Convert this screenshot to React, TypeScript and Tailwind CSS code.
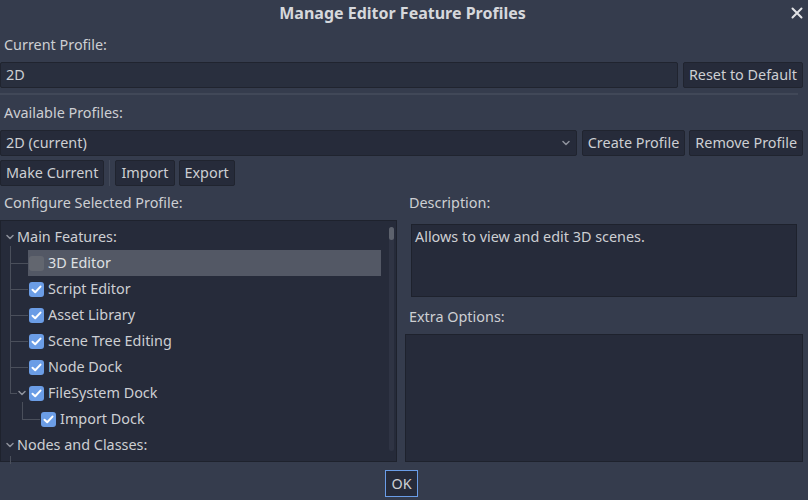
import React from "react";

const Chevron = ({ className = "" }: { className?: string }) => (
  <svg width="8" height="6" viewBox="0 0 8 6" className={className}>
    <path d="M1 1.5 L4 4.5 L7 1.5" stroke="#8d919b" strokeWidth="1.5" fill="none" strokeLinecap="round" strokeLinejoin="round" />
  </svg>
);

const Check = ({ checked }: { checked: boolean }) =>
  checked ? (
    <div className="w-[15px] h-[15px] rounded-[3px] bg-[#6b9de6] flex items-center justify-center">
      <svg width="11" height="9" viewBox="0 0 11 9">
        <path d="M1.5 4.8 L4.2 7.3 L9.5 1.6" stroke="#ffffff" strokeWidth="2" fill="none" strokeLinecap="round" strokeLinejoin="round" />
      </svg>
    </div>
  ) : (
    <div className="w-[15px] h-[15px] rounded-[3px] bg-[#62666f]" />
  );

const Btn = ({ children, className = "" }: { children: React.ReactNode; className?: string }) => (
  <div className={`h-[26px] flex items-center px-[5px] bg-[#262b3a] border border-[#20242f] rounded-[2px] ${className}`}>
    {children}
  </div>
);

const rows = ["Script Editor", "Asset Library", "Scene Tree Editing", "Node Dock"];

export default function App() {
  return (
    <div
      className="w-[808px] h-[500px] bg-[#353c4d] text-[#cdcfd3] text-[14.4px] overflow-hidden relative"
      style={{ fontFamily: '"Noto Sans", "Open Sans", sans-serif' }}
    >
      {/* Title */}
      <div className="h-[26px] flex items-center justify-center relative">
        <span className="font-bold text-[16px] text-[#d6d8dc] -ml-[3px]">Manage Editor Feature Profiles</span>
        <svg width="12" height="12" viewBox="0 0 12 12" className="absolute right-[5px] top-[7px]">
          <path d="M1.5 1.5 L10.5 10.5 M10.5 1.5 L1.5 10.5" stroke="#e2e3e6" strokeWidth="2" strokeLinecap="round" />
        </svg>
      </div>

      <div className="w-[803px]">
        <div className="h-[24px] mt-[7px] flex items-center pl-[4px]">Current Profile:</div>
        <div className="mt-[5px] flex gap-[5px] h-[26px]">
          <div className="flex-1 h-[26px] bg-[#292f3e] border border-[#20242f] rounded-[2px] flex items-center pl-[5px]">2D</div>
          <Btn>Reset to Default</Btn>
        </div>
        <div className="mt-[5px] h-[2px] w-[798px] bg-[#414858]" />
        <div className="h-[24px] mt-[6px] flex items-center pl-[4px]">Available Profiles:</div>
        <div className="mt-[5px] flex gap-[4px] h-[26px]">
          <div className="flex-1 h-[26px] bg-[#262b3a] border border-[#20242f] rounded-[2px] flex items-center pl-[5px] pr-[5px] justify-between mr-[1px]">
            <span>2D (current)</span>
            <Chevron className="mr-[1px]" />
          </div>
          <Btn>Create Profile</Btn>
          <Btn>Remove Profile</Btn>
        </div>
        <div className="mt-[4px] flex h-[26px] items-center">
          <Btn>Make Current</Btn>
          <div className="w-[1px] h-[26px] bg-[#444b5b] mx-[5px]" />
          <Btn>Import</Btn>
          <Btn className="ml-[4px]">Export</Btn>
        </div>
      </div>

      <div className="mt-[5px] flex">
        {/* Left column */}
        <div className="w-[397px] flex flex-col">
          <div className="h-[24px] flex items-center pl-[4px]">Configure Selected Profile:</div>
          <div className="mt-[5px] h-[242px] bg-[#262b3a] border border-[#1e222d] relative">
            {/* tree guide lines */}
            <div className="absolute left-[9px] top-[25px] w-[1px] h-[148px] bg-[#4a4f5b]" />
            <div className="absolute left-[9px] top-[235px] w-[1px] h-[8px] bg-[#4a4f5b]" />
            {[42, 68, 94, 120, 146].map((t) => (
              <div key={t} className="absolute left-[10px] w-[17px] h-[1px] bg-[#4a4f5b]" style={{ top: t }} />
            ))}
            <div className="absolute left-[10px] top-[172px] w-[6px] h-[1px] bg-[#4a4f5b]" />
            <div className="absolute left-[21px] top-[181px] w-[1px] h-[17px] bg-[#4a4f5b]" />
            <div className="absolute left-[21px] top-[198px] w-[18px] h-[1px] bg-[#4a4f5b]" />

            {/* scrollbar */}
            <div className="absolute left-[388px] top-[6px] w-[5px] h-[224px] rounded-full bg-[#2f3444]" />
            <div className="absolute left-[388px] top-[6px] w-[5px] h-[13px] rounded-full bg-[#5d626d]" />

            <div className="pt-[3px]">
              <div className="h-[26px] flex items-center">
                <Chevron className="ml-[5px]" />
                <span className="ml-[3px]">Main Features:</span>
              </div>
              <div className="h-[26px] flex items-center ml-[27px] mr-[15px] bg-[#535865]">
                <div className="ml-[1px]"><Check checked={false} /></div>
                <span className="ml-[4px] text-[#dfe0e3]">3D Editor</span>
              </div>
              {rows.map((r) => (
                <div key={r} className="h-[26px] flex items-center ml-[28px]">
                  <Check checked />
                  <span className="ml-[4px]">{r}</span>
                </div>
              ))}
              <div className="h-[26px] flex items-center">
                <Chevron className="ml-[17px]" />
                <div className="ml-[3px]"><Check checked /></div>
                <span className="ml-[4px]">FileSystem Dock</span>
              </div>
              <div className="h-[26px] flex items-center ml-[40px]">
                <Check checked />
                <span className="ml-[4px]">Import Dock</span>
              </div>
              <div className="h-[26px] flex items-center">
                <Chevron className="ml-[5px]" />
                <span className="ml-[3px]">Nodes and Classes:</span>
              </div>
            </div>
          </div>
        </div>

        {/* Right column */}
        <div className="ml-[8px] w-[398px] flex flex-col">
          <div className="h-[24px] flex items-center pl-[4px]">Description:</div>
          <div className="mt-[9px] ml-[6px] w-[386px] h-[73px] bg-[#262b3a] border border-[#1e222d] pl-[3px] pt-[2px] leading-[20px]">
            Allows to view and edit 3D scenes.
          </div>
          <div className="h-[24px] mt-[8px] flex items-center pl-[4px]">Extra Options:</div>
          <div className="mt-[5px] w-[398px] h-[128px] bg-[#262b3a] border border-[#1e222d]" />
        </div>
      </div>

      <div className="mt-[8px] flex justify-center">
        <div className="h-[27px] w-[33px] flex items-center justify-center bg-[#262b3a] border border-[#6a9de8] mr-[5px]">
          OK
        </div>
      </div>
    </div>
  );
}
